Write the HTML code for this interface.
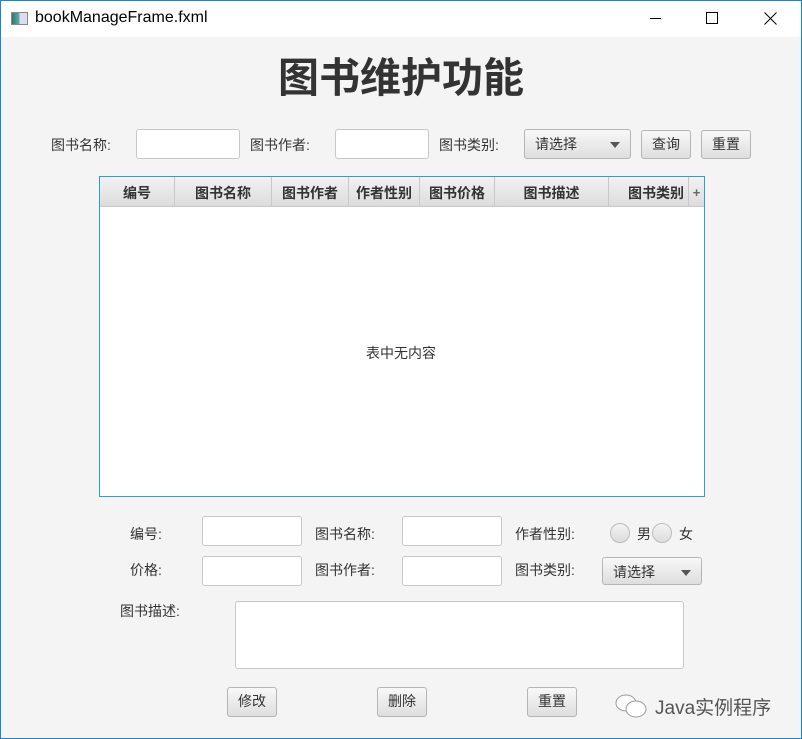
<!DOCTYPE html>
<html><head><meta charset="utf-8"><style>
*{box-sizing:border-box;margin:0;padding:0}
body{width:802px;height:739px;background:#f4f4f4;font-family:"Liberation Sans","Noto Sans CJK SC",sans-serif;font-size:14px;color:#333;position:relative;overflow:hidden}
.frame{position:absolute;left:0;top:0;width:802px;height:739px;border:1px solid #1883d7;pointer-events:none}
.tb{position:absolute;left:0;top:0;width:802px;height:37px;background:#fff}
.a{position:absolute}
.lbl{position:absolute;font-size:14px;color:#333;line-height:16px}
.tf{position:absolute;background:#fff;border:1px solid #c8c8c8;border-radius:3px}
.btn{position:absolute;border:1px solid #b5b5b5;border-radius:3px;background:linear-gradient(#f8f8f8,#dedede);text-align:center;font-size:14px;line-height:27px;color:#333}
.combo{position:absolute;border:1px solid #b5b5b5;border-radius:3px;background:linear-gradient(#f8f8f8,#dedede);font-size:14px;line-height:28px;padding-left:10px;color:#333}
.combo:after{content:"";position:absolute;right:10px;top:12px;border-left:5px solid transparent;border-right:5px solid transparent;border-top:6px solid #555}
.th{position:absolute;top:177px;height:30px;border-right:1px solid #c8c8c8;font-weight:bold;font-size:14px;line-height:32px;text-align:center;color:#333}
.rad{position:absolute;width:20px;height:20px;border-radius:50%;border:1px solid #bbb;background:linear-gradient(#f4f4f4,#dcdcdc)}
</style></head><body>
<div class="tb">
<div class="a" style="left:11px;top:12px;width:17px;height:13px;border:1px solid #888;background:linear-gradient(90deg,#2c7a6a 0,#6aa 50%,#dde 50%)"></div>
<div class="a" style="left:35px;top:9px;font-size:16px;color:#000">bookManageFrame.fxml</div>
<div class="a" style="left:650px;top:18px;width:11px;height:1px;background:#000"></div>
<div class="a" style="left:706px;top:12px;width:12px;height:12px;border:1px solid #000"></div>
<svg class="a" style="left:764px;top:12px" width="13" height="13"><path d="M0.5 0.5L12.5 12.5M12.5 0.5L0.5 12.5" stroke="#000" stroke-width="1"/></svg>
</div>
<div class="a" style="left:0;top:52px;width:802px;text-align:center;font-size:41px;font-weight:bold;color:#333;line-height:52px">图书维护功能</div>

<div class="lbl" style="left:51px;top:137px">图书名称:</div>
<div class="tf" style="left:136px;top:129px;width:104px;height:30px"></div>
<div class="lbl" style="left:250px;top:137px">图书作者:</div>
<div class="tf" style="left:335px;top:129px;width:94px;height:30px"></div>
<div class="lbl" style="left:439px;top:137px">图书类别:</div>
<div class="combo" style="left:524px;top:129px;width:107px;height:30px">请选择</div>
<div class="btn" style="left:641px;top:130px;width:50px;height:29px">查询</div>
<div class="btn" style="left:701px;top:130px;width:50px;height:29px">重置</div>

<div class="a" style="left:99px;top:176px;width:606px;height:321px;border:1px solid #2a9fd6;background:#fff"></div>
<div class="a" style="left:100px;top:177px;width:604px;height:30px;background:linear-gradient(#f2f2f2,#dcdcdc);border-bottom:1px solid #c8c8c8"></div>
<div class="th" style="left:100px;width:75px">编号</div>
<div class="th" style="left:175px;width:97px">图书名称</div>
<div class="th" style="left:272px;width:77px">图书作者</div>
<div class="th" style="left:349px;width:71px">作者性别</div>
<div class="th" style="left:420px;width:75px">图书价格</div>
<div class="th" style="left:495px;width:114px">图书描述</div>
<div class="th" style="left:609px;width:80px;text-align:right;padding-right:4px">图书类别</div>
<div class="th" style="left:689px;width:15px;border:none;font-size:13px;color:#666">+</div>
<div class="lbl" style="left:0;top:345px;width:802px;text-align:center">表中无内容</div>

<div class="lbl" style="left:130px;top:526px">编号:</div>
<div class="tf" style="left:202px;top:516px;width:100px;height:30px"></div>
<div class="lbl" style="left:315px;top:526px">图书名称:</div>
<div class="tf" style="left:402px;top:516px;width:100px;height:30px"></div>
<div class="lbl" style="left:515px;top:526px">作者性别:</div>
<div class="rad" style="left:610px;top:523px"></div>
<div class="lbl" style="left:637px;top:526px">男</div>
<div class="rad" style="left:652px;top:523px"></div>
<div class="lbl" style="left:679px;top:526px">女</div>

<div class="lbl" style="left:130px;top:562px">价格:</div>
<div class="tf" style="left:202px;top:556px;width:100px;height:30px"></div>
<div class="lbl" style="left:315px;top:562px">图书作者:</div>
<div class="tf" style="left:402px;top:556px;width:100px;height:30px"></div>
<div class="lbl" style="left:515px;top:562px">图书类别:</div>
<div class="combo" style="left:602px;top:557px;width:100px;height:28px">请选择</div>

<div class="lbl" style="left:120px;top:603px">图书描述:</div>
<div class="tf" style="left:235px;top:601px;width:449px;height:68px"></div>

<div class="btn" style="left:227px;top:687px;width:50px;height:30px">修改</div>
<div class="btn" style="left:377px;top:687px;width:50px;height:30px">删除</div>
<div class="btn" style="left:527px;top:687px;width:50px;height:30px">重置</div>
<svg class="a" style="left:614px;top:692px" width="36" height="28"><ellipse cx="12" cy="11" rx="10" ry="8" fill="#fff" stroke="#999"/><ellipse cx="22" cy="17" rx="10" ry="8" fill="#fff" stroke="#999"/></svg>
<div class="a" style="left:655px;top:693px;font-size:19px;color:#555">Java实例程序</div>
<div class="frame"></div>
</body></html>
